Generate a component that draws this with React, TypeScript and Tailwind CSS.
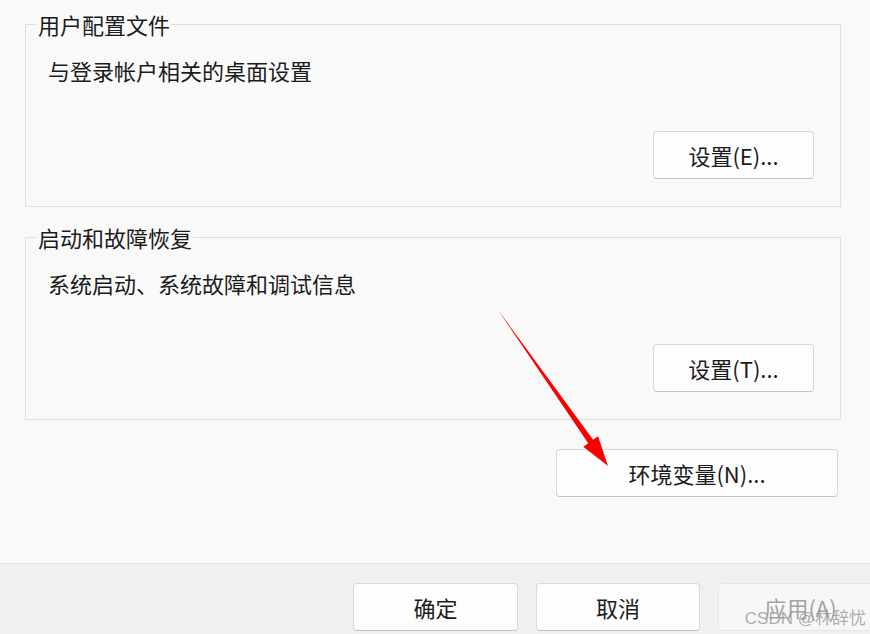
/**
 * 系统属性 - 高级 选项卡（下半部分）
 */

const font = 'font-["Noto_Sans_CJK_SC","Noto_Sans",sans-serif]';

function DialogButton({
  label,
  className = '',
  disabled = false,
}: {
  label: string;
  className?: string;
  disabled?: boolean;
}) {
  return (
    <button
      type="button"
      disabled={disabled}
      className={
        disabled
          ? `flex h-[48px] shrink-0 items-center justify-center rounded-[4px] border border-[#e6e6e6] bg-[#f7f7f7] text-[22px] leading-[28px] text-[#a3a3a3] ${className}`
          : `flex h-[48px] shrink-0 items-center justify-center rounded-[4px] border border-[#d9d9d9] border-b-[#c4c4c4] bg-[#fdfdfd] text-[22px] leading-[28px] text-[#1b1b1b] ${className}`
      }
    >
      {label}
    </button>
  );
}

function GroupBox({
  title,
  description,
  buttonLabel,
}: {
  title: string;
  description: string;
  buttonLabel: string;
}) {
  return (
    <fieldset className="mr-[29px] ml-[25px] flex flex-col border border-[#e0e0e0] px-0 pb-[27px]">
      <legend className="ml-[11px] px-[1px] text-[22px] leading-[28px] text-[#1b1b1b]">
        {title}
      </legend>
      <p className="mt-[18px] pl-[22px] text-[22px] leading-[28px] text-[#1b1b1b]">
        {description}
      </p>
      <div className="mt-[47px] flex justify-end pr-[26px]">
        <DialogButton label={buttonLabel} className="w-[161px]" />
      </div>
    </fieldset>
  );
}

export default function App() {
  return (
    <div
      className={`relative flex h-[634px] w-[870px] flex-col overflow-hidden bg-[#f9f9f9] ${font}`}
    >
      <div className="flex flex-1 flex-col pt-[10px]">
        <GroupBox
          title="用户配置文件"
          description="与登录帐户相关的桌面设置"
          buttonLabel="设置(E)..."
        />
        <div className="h-[16px]" />
        <GroupBox
          title="启动和故障恢复"
          description="系统启动、系统故障和调试信息"
          buttonLabel="设置(T)..."
        />
        <div className="mt-[29px] flex justify-end pr-[32px]">
          <DialogButton label="环境变量(N)..." className="w-[282px]" />
        </div>
      </div>

      <footer className="flex h-[71px] shrink-0 items-start gap-[18px] border-t border-[#e5e5e5] bg-[#f0f0f0] pt-[19px] pl-[353px]">
        <DialogButton label="确定" className="w-[165px]" />
        <DialogButton label="取消" className="w-[164px]" />
        <DialogButton label="应用(A)" className="w-[165px]" disabled />
      </footer>

      {/* 标注箭头 */}
      <svg
        className="pointer-events-none absolute inset-0"
        width="870"
        height="634"
        viewBox="0 0 870 634"
        aria-hidden
      >
        <polygon
          points="498,310 593.2,439.8 598.1,436.3 608,466 583.3,446.7 588.2,443.2"
          fill="#fb0000"
        />
      </svg>

      {/* 水印 */}
      <span className="pointer-events-none absolute right-[4px] bottom-[4px] font-['Liberation_Sans','Noto_Sans_CJK_SC',sans-serif] text-[17px] leading-[22px] text-[#9a9a9a]/80">
        CSDN @林辞忧
      </span>
    </div>
  );
}
